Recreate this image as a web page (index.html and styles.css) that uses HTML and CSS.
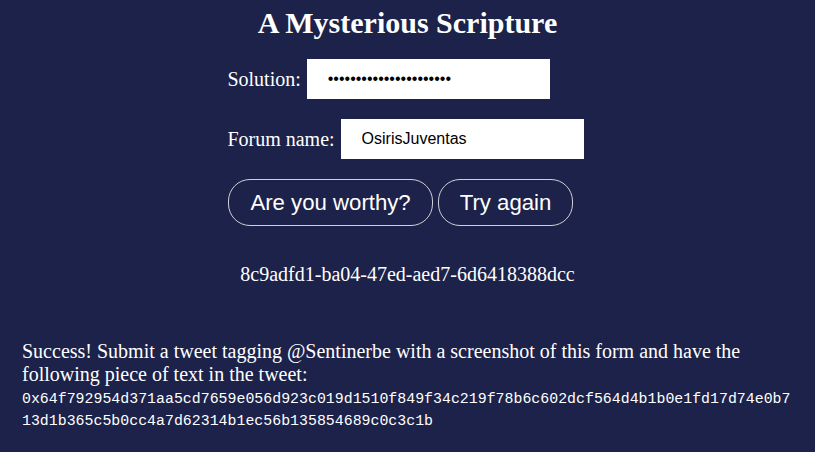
FILE: index.html
```html
<!DOCTYPE html>
<html>
<head>
<meta charset="utf-8">
<link rel="stylesheet" href="styles.css">
</head>
<body>
<div class="page">
  <h1 class="title">A Mysterious Scripture</h1>
  <div class="form-wrap">
    <div class="form">
      <div class="row">
        <label class="label">Solution:</label>
        <input class="field" type="password" value="abcdefghijklmnopqrstuv">
      </div>
      <div class="row">
        <label class="label">Forum name:</label>
        <input class="field" type="text" value="OsirisJuventas">
      </div>
      <div class="buttons">
        <button class="btn">Are you worthy?</button>
        <button class="btn">Try again</button>
      </div>
    </div>
  </div>
  <p class="hash">8c9adfd1-ba04-47ed-aed7-6d6418388dcc</p>
  <p class="success">Success! Submit a tweet tagging @Sentinerbe with a screenshot of this form and have the following piece of text in the tweet:</p>
  <p class="sig">0x64f792954d371aa5cd7659e056d923c019d1510f849f34c219f78b6c602dcf564d4b1b0e1fd17d74e0b713d1b365c5b0cc4a7d62314b1ec56b135854689c0c3c1b</p>
</div>
</body>
</html>
```
FILE: styles.css
```css
html, body {
  margin: 0;
  background: #1c2249;
  color: #ffffff;
  font-family: "Liberation Serif", "Times New Roman", serif;
  font-size: 20px;
}
.page {
  padding: 0 22px;
  height: 452px;
  box-sizing: border-box;
}
.title {
  margin: 0;
  padding-top: 5px;
  font-size: 30px;
  font-weight: bold;
  text-align: center;
  line-height: 36px;
}
.form-wrap {
  display: flex;
  justify-content: center;
  margin-top: 18px;
}
.form {
  display: flex;
  flex-direction: column;
  align-items: flex-start;
  gap: 20px;
  margin-left: -4px;
}
.row {
  display: flex;
  align-items: center;
  font-size: 20px;
}
.field {
  margin-left: 6px;
  width: 243px;
  height: 40px;
  box-sizing: border-box;
  border: none;
  outline: none;
  background: #ffffff;
  color: #000000;
  padding: 0 21px;
  font-family: "Liberation Sans", Arial, sans-serif;
  font-size: 16px;
}
.buttons {
  display: flex;
  gap: 5px;
  margin-left: 1px;
}
.btn {
  height: 47px;
  padding: 0 21px;
  background: transparent;
  color: #ffffff;
  border: 1px solid #cfd0d8;
  border-radius: 22px;
  font-family: "Liberation Sans", Arial, sans-serif;
  font-size: 22.2px;
}
.hash {
  margin: 37px 0 0;
  text-align: center;
  font-size: 20px;
  line-height: 23px;
}
.success {
  margin: 54px 0 0;
  font-size: 20px;
  line-height: 23px;
}
.sig {
  margin: 2px 0 0;
  font-family: "Liberation Mono", "DejaVu Sans Mono", monospace;
  font-size: 14.9px;
  line-height: 22px;
  word-break: break-all;
}
```
